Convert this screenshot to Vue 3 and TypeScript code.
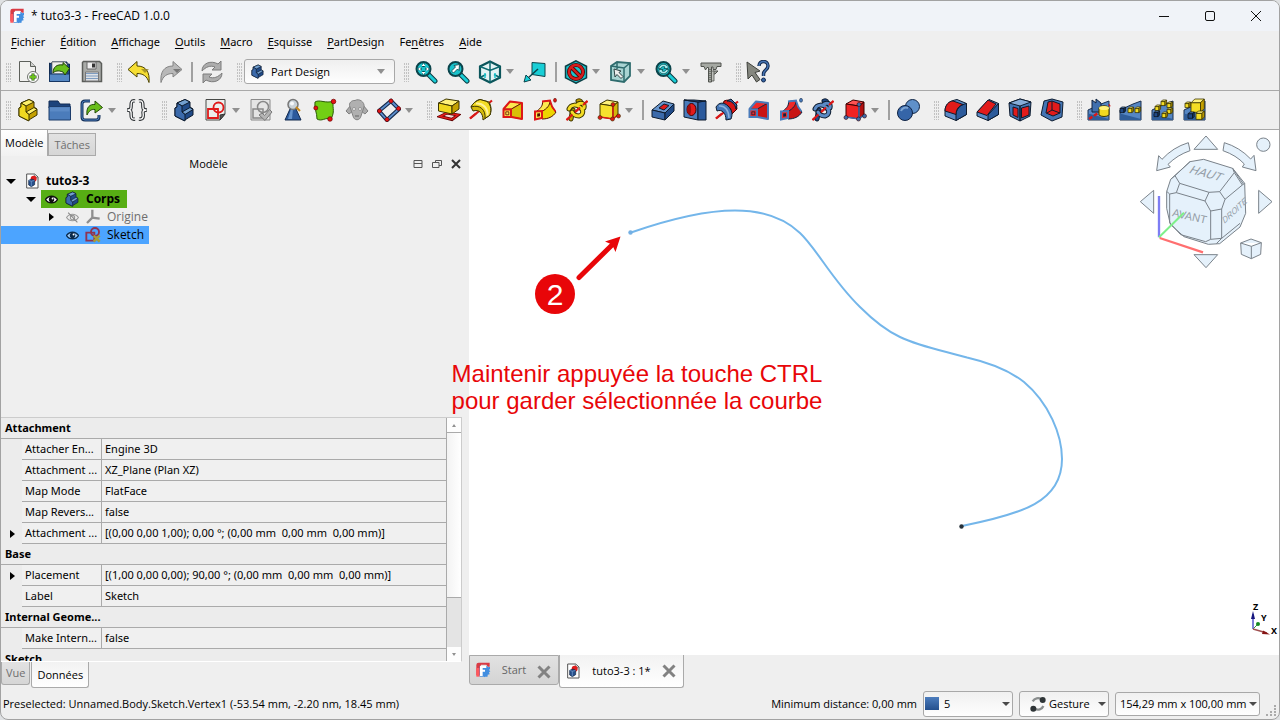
<script setup lang="ts">
import { ref } from 'vue'

type Item =
  | { kind: 'grip' }
  | { kind: 'sep' }
  | { kind: 'combo' }
  | { kind: 'tool'; icon: string; label: string; off?: boolean }
  | { kind: 'more'; label: string }

const grip: Item = { kind: 'grip' }
const sep: Item = { kind: 'sep' }
const tool = (icon: string, label: string, off = false): Item => ({ kind: 'tool', icon, label, off })
const more = (label: string): Item => ({ kind: 'more', label })

const lBody = (a: string, b: string, c: string, s: string) =>
  `<g stroke="${s}" stroke-width="1" stroke-linejoin="round"><path fill="${b}" d="M3 10l2-1V5l8-3.500 5 2.500v5l3 2v6l-9 5.500-9-4.500z"/><path fill="${a}" d="M5 5l8-3.500 5 2.500-8 4zM10 14l8-4.500 3 2-8 5z"/><path fill="${c}" d="M5 5l5 3v6l3 2.500V23L3 18v-8l2-1z"/></g>`

const magnifier = (inner: string) =>
  `<path d="M14 14l7 7" stroke="#0a3a40" stroke-width="5" stroke-linecap="round"/><path d="M15 15l6 6" stroke="#19cdd6" stroke-width="3" stroke-linecap="round"/><circle cx="9.500" cy="9" r="7" fill="#19c2cb" stroke="#0b444b" stroke-width="2"/>${inner}`

const loft = (face: string, side: string, rim: string, dark: string) =>
  `<path d="M2.500 11L9 3.500 21 5l-10.500 6z" fill="${side}" stroke="${dark}" stroke-width=".8"/><path d="M10.500 11L21 5v16l-10.500-2z" fill="${face}" stroke="${dark}" stroke-width=".8"/><path d="M2.500 11L9 3.500 21 5v16l-10.500-2" fill="none" stroke="${rim}" stroke-width="2" stroke-linejoin="round"/><path d="M2.500 11.500h7.500V19H2.500z" fill="${side}" stroke="${rim}" stroke-width="2"/><path d="M4.800 13.800h3v3h-3z" fill="none" stroke="${dark}" stroke-width=".8"/>`

const pipe = (face: string, side: string, rim: string, dark: string) =>
  `<path d="M8 12c5-2 8-5 9-9 1 5 3 8 6 11-3 5-8 7-14 7z" fill="${face}" stroke="${dark}"/><path d="M4 13c4-3 6-6 5.500-9.500L17 2.500c0 5-3 8-8 11z" fill="${side}" stroke="${dark}"/><path d="M9 3.500l8-1c1 5 3 8 5.500 11" fill="none" stroke="${rim}" stroke-width="1.800"/><path d="M2 13.500l7-.5v7l-7 1.500z" fill="${side}" stroke="${rim}" stroke-width="2"/><path d="M4.200 15.500l2.800-.3v3l-2.800.5z" fill="${dark}"/><ellipse cx="22" cy="2.300" rx="1.500" ry="2" fill="${rim}" stroke="${dark}" stroke-width=".5"/>`

const helix = (a: string, b: string, dark: string, rim: string) =>
  `<path d="M1.500 22L22.500 3" stroke="${rim}" stroke-width="2"/><g fill="none" stroke-linecap="round"><path d="M13 3c3-1 4 2 2 7M6 21c1-3 0-5 2-9" stroke="${dark}" stroke-width="5"/><path d="M13 3c3-1 4 2 2 7M6 21c1-3 0-5 2-9" stroke="${b}" stroke-width="3"/><path d="M4 11c2-5 8-5 12-1 3 3 2 7-2 8-4 0-6-2-7-4M13 6c4-2 7 0 6 4" stroke="${dark}" stroke-width="5"/><path d="M4 11c2-5 8-5 12-1 3 3 2 7-2 8-4 0-6-2-7-4M13 6c4-2 7 0 6 4" stroke="${a}" stroke-width="3"/></g><path d="M1.500 22l6-5.500M10 14l5-4.500M18 7l4.500-4" stroke="${rim}" stroke-width="2"/>`

const turned = (a: string, b: string, hi: string, dark: string) =>
  `<path d="M2 9C5 4 8 2 11 1.500L20 4c3 5 2 10 1 13l-7 5c0-7-4-11-10-9z" fill="${b}" stroke="${dark}" stroke-linejoin="round"/><path d="M2 9C11 6 17 12 16 20.500l5-3.500c2-7 0-11-3-13.500l-7-2C7 3 4 5 2 9z" fill="${a}" stroke="${dark}" stroke-linejoin="round"/><path d="M7 5.500c7-1 12 5 11.500 12" fill="none" stroke="${hi}" stroke-width="2"/>`

const box = (face: string, top: string, side: string, dark: string, rim: string) =>
  `<g stroke="${dark}" stroke-linejoin="round"><path fill="${top}" d="M3 6l7-4 11 2-5 4z"/><path fill="${face}" d="M3 6l13 2v13L3 19z"/><path fill="${side}" d="M16 8l5-4v12l-5 5z"/></g><path d="M16 7v14M3 19l13 2 5-4" stroke="${rim}" stroke-width="1.500" fill="none"/><g fill="${rim}" stroke="${dark}" stroke-width=".6"><circle cx="16" cy="6.500" r="2"/><circle cx="3" cy="19.500" r="2"/><circle cx="15.500" cy="21" r="2"/><circle cx="21.500" cy="18" r="2"/></g>`

const wedge = '<path d="M1 12L14 6l8-3v19H1z" fill="#5586c4" stroke="#1a2f4d" stroke-linejoin="round"/><path d="M1 15.500L22 21v1H1z" fill="#2f5d99"/>'
const yCube = (x: number, y: number, s: number, f = '#f4dd24', g = '#fff27a', h = '#c4a000', d = '#3c3500') =>
  `<g transform="translate(${x} ${y}) scale(${s})" stroke="${d}" stroke-width="${0.8 / s}" stroke-linejoin="round"><path fill="${g}" d="M0 2l2-2h5l-2 2z"/><path fill="${f}" d="M0 2h5v5H0z"/><path fill="${h}" d="M5 2l2-2v5L5 7z"/></g>`
const bCube = (x: number, y: number, s: number) => yCube(x, y, s, '#204a87', '#5b8ac5', '#17365f', '#0b1521')

const docIcon = '<path d="M4 1.500h12l5 4.500v16.500H4z" fill="#fff" stroke="#555" stroke-width="1.500"/><path d="M15.500 2v5h5" fill="#ccc" stroke="#555"/><circle cx="14.500" cy="8.500" r="4.500" fill="#e01b1b"/><path d="M7 11l5-2 4 2v6.500l-5 3-4-2.500z" fill="#27508c" stroke="#10233f"/><path d="M7 11l4 1.500 5-1.500M11 12.500V20" stroke="#7fa6d6" fill="none"/>'

const icons: Record<string, string> = {
  logo: '<path d="M2 4.500Q2 1 5.500 1H22v6h-3L17 4H9v16H2z" fill="#d93a44"/><path d="M2 9h5v13H2z" fill="#ff585d"/><path d="M7 6h11v16H7z" fill="#428ee0"/><path d="M13 9l3-1 2-2 2 2 2.500-1v3.500L21 12l2 2-2 1.500 1 3-3 .5v3l-3-1-2 2-1.500-3L10 21v-4l3-1z" fill="#428ee0"/><path d="M7.500 5.500H17V9h-5.500v2.500H15v3h-3.500V21h-4z" fill="#fff"/>',
  new: '<path d="M3.500 1.500h11l5 5v15h-16z" fill="#f1f1ef" stroke="#5d605b"/><path d="M14.500 1.500v5h5" fill="#cfd0ce" stroke="#5d605b"/><circle cx="17" cy="17" r="5.500" fill="#fff" stroke="#6d706b"/><path d="M17 13.500v7M13.500 17h7" stroke="#224f0a" stroke-width="3"/><path d="M17 14v6M14 17h6" stroke="#6cc21d" stroke-width="1.800"/>',
  open: '<path d="M1.500 3v18.500h20V4H19V2H4v2z" fill="#1f4a86" stroke="#102a50"/><path d="M4 2h13l2 2v10H4z" fill="#f0f0ee" stroke="#555" stroke-width=".6"/><path d="M1.500 14h20v7.500h-20z" fill="#5588c4" stroke="#163663"/><path d="M5 13c0-6 4-9 10-8V2.500l6.500 6L17 15l-2-3c-5-2-8-1-10 1z" fill="#6abf1b" stroke="#1e4009"/>',
  save: '<path d="M3.500 1.500h16l2 2v18h-19v-19z" fill="#a9aba8" stroke="#5b5d5a" stroke-width="1.500"/><path d="M7 2h9v7H7z" fill="#eee" stroke="#666"/><path d="M12 3.500h3v4h-3z" fill="#333"/><path d="M5.500 12h13v9h-13z" fill="#dfe2e6" stroke="#777"/><path d="M6 13.500h12M6 16h12M6 18.500h12" stroke="#7d9cc0"/>',
  undo: '<path d="M1 9.500L10 1.500v4.500c9 0 13 6 12 16.500C20 16 16 13.500 10 13.500V17z" fill="#f6de33" stroke="#4c4300" stroke-linejoin="round"/><path d="M14 9h8l-4 4z" fill="#8a7a20" opacity=".7"/>',
  redo: '<path d="M23 9.500L14 1.500v4.500c-9 0-13 6-12 16.500C4 16 8 13.500 14 13.500V17z" fill="#b8b8b8" stroke="#838383" stroke-linejoin="round"/><path d="M14 9h8l-4 4z" fill="#777"/>',
  refresh: '<path d="M2 11C2 3 11 0 18 4l3-3v9h-9l3-3c-5-2-9 0-13 4zM22 13c0 8-9 11-16 7l-3 3v-9h9l-3 3c5 2 9 0 13-4z" fill="#adadad" stroke="#7c7c7c" stroke-linejoin="round"/>',
  body: lBody('#729fcf', '#204a87', '#3b6aab', '#0d1b2e'),
  part: lBody('#fdf06a', '#c4a000', '#f0d820', '#3d3500'),
  group: '<path d="M1 3h9l2 3h10v4H1z" fill="#1c437c" stroke="#122c55"/><path d="M1 8.500h21.500v13.500H1z" fill="#4b7cbb" stroke="#1c3c6b"/><path d="M2 9.500h19.500v4H2z" fill="#6594cd" opacity=".6"/>',
  link: '<path d="M10 3H5Q2 3 2 6v13q0 3 3 3h11q3 0 3-3v-2" fill="none" stroke="#16325a" stroke-width="3"/><path d="M10 3H5Q2 3 2 6v13q0 3 3 3h11q3 0 3-3v-2" fill="none" stroke="#4a7dbd" stroke-width="1"/><path d="M7 17C6 9 10 6 15 6.500V3l7.500 6.500L15 15v-3.500C11 11 9 13 7 17z" fill="#6abf1b" stroke="#234a08" stroke-linejoin="round"/>',
  braces: '<g fill="none" stroke="#34383b" stroke-width="3.500"><path d="M10 3C5 2 6.500 7 6 9.500 6 11 5 12 2 12c3 0 4 1 4 2.500C6.500 17 5 22 10 21M14 3c5-1 3.500 4 4 6.500 0 1.500 1 2.500 4 2.500-3 0-4 1-4 2.500.500 2.500 1 7.500-4 6.500"/></g><g fill="none" stroke="#fff" stroke-width="1.300"><path d="M10 3C5 2 6.500 7 6 9.500 6 11 5 12 2.500 12 5 12 6 13 6 14.500 6.500 17 5 22 10 21M14 3c5-1 3.500 4 4 6.500 0 1.500 1 2.500 3.500 2.500-2.500 0-3.500 1-3.500 2.500.500 2.500 1 7.500-4 6.500"/></g>',
  sketch: '<path d="M2 1.500h19V16l-5 6H2z" fill="#eceeec" stroke="#484a47"/><path d="M16 22v-5l5-1z" fill="#555" stroke="#333"/><g fill="none" stroke="#e01a1a" stroke-width="1.800"><circle cx="14.500" cy="9.500" r="5"/><path d="M4 11h10v9H4z"/></g>',
  validate: '<path d="M2 1.500h19V22H2z" fill="#e4e4e4" stroke="#8a8a8a"/><g fill="none" stroke="#888" stroke-width="1.500"><circle cx="14" cy="9" r="5.500"/><path d="M4 11h10v9H4z"/></g><path d="M10 17l3-2 2.500 2.500 5-6 2.500 2.500-7 8.500z" fill="#b5b5b5" stroke="#7a7a7a"/>',
  check: '<path d="M9 11h6l5 11H4z" fill="#2c5a9c" stroke="#122a4e"/><path d="M10 11l-3 10h4l1-10z" fill="#6593cb"/><circle cx="12" cy="6.500" r="5" fill="#c9d2d9" stroke="#777" stroke-width="1.500"/><circle cx="11" cy="5.500" r="2" fill="#f6f8fa"/><path d="M15 9l4 4" stroke="#c88719" stroke-width="2"/>',
  binder: '<path d="M2 4c5-3 10 2 19-1-3 5 2 9-3 18-6-2-9 3-14 0 0-7-3-10-2-17z" fill="#72cf14" stroke="#2c5c06"/><g fill="#e51414" stroke="#6f0000" stroke-width=".7"><circle cx="20.500" cy="3.500" r="2.300"/><circle cx="2.800" cy="10" r="2"/><circle cx="17" cy="21" r="2.300"/></g>',
  clone: '<path d="M6 7l-5 6 3 3 4-3M18 7l5 6-3 3-4-3" fill="#aaa" stroke="#808080"/><path d="M5 9C3 5 7 2 10 2.500 14 0 20 4 19 9l-3 9c-1 5-7 5-8 0z" fill="#b0b0b0" stroke="#838383"/><circle cx="9" cy="11" r="1.500" fill="#eee" stroke="#777" stroke-width=".6"/><circle cx="15" cy="11" r="1.500" fill="#eee" stroke="#777" stroke-width=".6"/><path d="M10 18h4" stroke="#666"/>',
  datum: '<path d="M14 3l8 8-12 11-8-9z" fill="none" stroke="#13284a" stroke-width="4"/><path d="M14 3l8 8-12 11-8-9z" fill="none" stroke="#5c8dcb" stroke-width="1.800"/><g fill="#e51414" stroke="#6f0000" stroke-width=".6"><circle cx="14" cy="3" r="2"/><circle cx="21.500" cy="10.500" r="2"/><circle cx="10" cy="21.500" r="2"/><circle cx="2.500" cy="13" r="2"/></g>',
  fitAll: magnifier('<path d="M9.500 3.500v11M4 9h11" stroke="#0b444b" stroke-width="2.500" stroke-dasharray="3.500 4"/><path d="M9.500 3.500l2 2.500h-4zM9.500 14.500l-2-2.500h4zM4 9l2.500-2v4zM15 9l-2.500-2v4z" fill="#fff"/>'),
  fitSel: magnifier('<path d="M13.500 4.500l-5.500 1 1.500 1.500-4 4 2 2 4-4 1.500 1.500z" fill="#fff" stroke="#083b41" stroke-width=".8"/>'),
  axo: '<path d="M12 1.500l10 5v11l-10 5-10-5v-11z" fill="#e4f3f4" stroke="#0b555b" stroke-width="2.200"/><path d="M2 6.500l10 4 10-4M12 10.500v12M12 1.500v9M2 17.500l6-3M22 17.500l-6-3" fill="none" stroke="#0b6a70" stroke-width="1.500"/><path d="M7 13v5M17 13v5" stroke="#1bcad2" stroke-width="1.500"/>',
  plane: '<path d="M9 2.500l13 1v13l-13-2z" fill="#18ced6" stroke="#0b444b"/><path d="M15 9L5 18" stroke="#0b444b" stroke-width="1.500"/><path d="M1 22l2-7 5 5z" fill="#18ced6" stroke="#0b444b"/>',
  drawStyle: '<path d="M12 .8l10.500 5.500v11.500L12 23.200 1.500 17.800V6.300z" fill="#19c3cc" stroke="#0b3f45" stroke-width="1.500"/><circle cx="12" cy="12" r="7" fill="none" stroke="#4e0606" stroke-width="4"/><path d="M7 7l10 10" stroke="#4e0606" stroke-width="4"/><circle cx="12" cy="12" r="7" fill="none" stroke="#d51e1e" stroke-width="2.400"/><path d="M7 7l10 10" stroke="#d51e1e" stroke-width="2.400"/>',
  boxSel: '<path d="M2 6l6-4 13 1v13l-6 6-13-2z" fill="#a9d4d3" stroke="#2f6c6e" stroke-width="1.800"/><path d="M2 6l13 2 6-5M15 8v14M8 2v7" fill="none" stroke="#2f6c6e" stroke-width="1.500"/><path d="M5 9l7 2-2 1.500 4 4-2 2-4-4L6 17z" fill="#eee" stroke="#2e4344"/>',
  sync: magnifier('<path d="M4.500 8.500c1-5 7-5 8-3l1.500-1v4h-4l1-1.500c-2-1-4 0-4 1.500zM14.500 9.500c-1 5-7 5-8 3l-1.500 1v-4h4l-1 1.500c2 1 4 0 4-1.500z" fill="#a5ecee" stroke="#083b41" stroke-width=".7"/>'),
  measure: '<path d="M2 3h20v3.500h-4l-1 3h-3V7h-1.500v15h-3V7.500H8L6.500 10 5 6.500H2zM14 11h5l-3 3h-2v-3z" fill="#a6a9a3" stroke="#50534e" stroke-linejoin="round"/><path d="M12.500 11H15v10h-2.500z" fill="#bfc1bc" stroke="#50534e" stroke-width=".8"/><path d="M11 9v12" stroke="#3f423e" stroke-dasharray="1 1"/>',
  whats: '<path d="M1 2l13 9-5 1.500 5 7-3.500 2.500L6 15l-4 4z" fill="#85877f" stroke="#3e403b"/><path d="M13 6c0-6 9-6 9 0 0 4-4.500 4-4.500 8v2" fill="none" stroke="#152b4f" stroke-width="3.500"/><path d="M13 6c0-6 9-6 9 0 0 4-4.500 4-4.500 8v2" fill="none" stroke="#4675b4" stroke-width="1.500"/><circle cx="17.500" cy="20" r="2" fill="#3565a4" stroke="#152b4f"/>',
  pad: '<path d="M3 18.500l7-3.500 11 2-6 4.500z" fill="#f5dada" stroke="#5d0000" stroke-width="3"/><path d="M3 18.500l7-3.500 11 2-6 4.500z" fill="none" stroke="#e21c1c" stroke-width="1.600"/><g stroke="#3d3500" stroke-linejoin="round"><path d="M1.500 5L9 1l13 2-7 5z" fill="#fff17a"/><path d="M1.500 5L15 8v8L1.500 13z" fill="#f0d820"/><path d="M15 8l7-5v8l-7 5z" fill="#c4a000"/></g>',
  revolve: '<path d="M1 20.500L23 2.500" stroke="#d81818" stroke-width="2.200"/>' + turned('#f3dc25', '#d6bb0c', '#fff39a', '#3d3500') + '<path d="M1 20.500l6-5" stroke="#d81818" stroke-width="2.200"/>',
  loft: loft('#d9be08', '#fce94f', '#dd1717', '#5f0000'),
  pipe: pipe('#edd400', '#fce94f', '#dd1717', '#4d1000'),
  helix: helix('#f3dc25', '#c4a000', '#3d3500', '#dd1717'),
  addPrim: box('#f6e02d', '#fff27a', '#d3b60a', '#3d3500', '#dd1717'),
  pocket: '<g stroke="#0d1b2e" stroke-linejoin="round"><path d="M1 12L12 3l11 3-9 9z" fill="#6795cd"/><path d="M1 12l13 3v7L1 19z" fill="#3b6aab"/><path d="M14 15l9-9v7l-9 9z" fill="#204a87"/><path d="M8 10l5-4 5 1.500-5 4.500z" fill="#e01a1a"/></g>',
  hole: '<g stroke="#0d1b2e" stroke-linejoin="round"><path d="M1 2l14 2v18L1 19z" fill="#4b7cbb"/><path d="M15 4l8-1v19h-8z" fill="#2c5a9c"/><path d="M1 2h10l12 1-8 1z" fill="#204a87"/></g><ellipse cx="8.500" cy="11.500" rx="4.500" ry="6" fill="#e31b1b" stroke="#400"/><path d="M7 6c-4 3-4 9 0 11 1.500-3 1.500-8 0-11z" fill="#a10d0d"/>',
  groove: '<path d="M1 20.500L23 3.500" stroke="#d81818" stroke-width="2.200"/><path d="M9 3c7-3 13 2 13 8l-5 5C16 9 13 7 8 7z" fill="#d61717" stroke="#4e0000"/><path d="M1 9C4 4 9 4 13 8c4 4 5 8 3 13l-5 1c0-7-4-11-9-9z" fill="#4476b7" stroke="#0d1b2e"/><path d="M4 8c6-1 10 5 10 12" fill="none" stroke="#8db3dd" stroke-width="1.500"/><path d="M12 3l4-2 6 6-1 4C20 6 17 3 12 3z" fill="#3565a8" stroke="#0d1b2e"/><path d="M1 20.500l6-5" stroke="#d81818" stroke-width="2.200"/>',
  subLoft: loft('#c81414', '#ef2929', '#4a7bba', '#10233f'),
  subPipe: pipe('#c81414', '#ef2929', '#4a7bba', '#10233f'),
  subHelix: helix('#5b8ac5', '#204a87', '#0d1b2e', '#dd1717'),
  subPrim: box('#ef2323', '#ff5252', '#b51010', '#3d0000', '#3e6dac'),
  bool: '<g stroke="#0f2343"><circle cx="15.500" cy="8.500" r="7" fill="#5f90c9"/><circle cx="8" cy="15" r="7.500" fill="#3565a8"/></g><path d="M4 13c1-3 4-4 7-3" stroke="#7ba3d2" stroke-width="2" fill="none"/>',
  fillet: '<g stroke="#0d1b2e" stroke-linejoin="round"><path d="M13 1.500l9.500 4v11L12 22.500 1 18v-5C1 7 5 3 13 1.500z" fill="#5b8ac5"/><path d="M12 17c0-6 4-10 10.500-11.500v11L12 22.500z" fill="#2d5b9b"/><path d="M1 13C1 7 5 3 9 3l10 3.500c-4 1-7 5-7 10z" fill="#e21b1b"/></g>',
  chamfer: '<g stroke="#0d1b2e" stroke-linejoin="round"><path d="M13 1.500l9.500 4v11L12 22.500 1 18v-4z" fill="#5b8ac5"/><path d="M12 17l10.500-11.500v11L12 22.500z" fill="#2d5b9b"/><path d="M1 14L12 2l8 4-9 11.500z" fill="#e21b1b"/></g>',
  draft: '<g stroke="#0d1b2e" stroke-linejoin="round"><path d="M1 5l11-4 11 3-1 14-10 5L2 18z" fill="#4475b4"/><path d="M1 5l11-4 11 3-11 4z" fill="#86acd8"/><path d="M12 8v15" stroke-width="1.500"/><path d="M5 9l5 1.500v9L5 17zM13.500 10L21 8v9l-7.500 3z" fill="#e21b1b"/></g>',
  thick: '<g stroke="#0d1b2e" stroke-linejoin="round"><path d="M4 3l8-2 11 3-1 15-10 4L1 17z" fill="#4475b4"/><path d="M8 4l4-1 8 3v9l-7 3-7-3z" fill="#e21b1b"/><path d="M12 3v9l8 3M12 12l-5 3" fill="none"/></g>',
  mirror: wedge + '<path d="M5 2l4 3V1l5 4v9H5z" fill="#3f6fae" stroke="#10233f"/><path d="M2 21L23 7" stroke="#d81818" stroke-width="2.500" stroke-dasharray="4 2"/><path d="M12 10c1-3 9-3 10 0v7c-2 2-8 2-10 0z" fill="#f0d820" stroke="#3d3500"/><ellipse cx="17" cy="10" rx="5" ry="2" fill="#fff17a"/>',
  linear: wedge + bCube(1, 9, 0.8) + yCube(9, 9, 0.8) + yCube(16, 9, 0.8),
  polar: wedge + yCube(10, 2, 0.8) + yCube(16, 4, 0.8) + yCube(4, 7, 0.8) + yCube(16, 10, 0.8) + bCube(3, 13, 0.8) + yCube(11, 14, 0.8),
  multi: wedge + yCube(8, 1, 1.9) + yCube(2, 4, 0.8) + bCube(5, 14, 0.9) + yCube(13, 13, 1.2),
  doc: docIcon,
  origin: '<path d="M11 1v12l11 1.500M11 13l-8 8" fill="none" stroke="#8e8e8e" stroke-width="3.500"/>',
  treeSketch: '<g fill="none" stroke="#8f3350" stroke-width="2.800"><circle cx="15" cy="7.500" r="6"/><path d="M2 8.500h12v12H2z"/></g><path d="M13 13l9 9M22 13l-9 9" stroke="#a69c35" stroke-width="3.500"/>',
  eye: '<path d="M1 12C6 4 18 4 23 12 18 20 6 20 1 12z" fill="#fff" stroke="#111" stroke-width="2.500"/><circle cx="12" cy="12" r="5" fill="#111"/><circle cx="14" cy="10" r="1.800" fill="#fff"/>',
  eyeSketch: '<path d="M1 12C6 4 18 4 23 12 18 20 6 20 1 12z" fill="#9fcfff" stroke="#0c2b4c" stroke-width="2.500"/><circle cx="12" cy="12" r="5" fill="#0c2b4c"/><circle cx="14" cy="10" r="1.800" fill="#fff"/>',
  eyeOff: '<path d="M1 12C6 4 18 4 23 12 18 20 6 20 1 12z" fill="none" stroke="#999" stroke-width="2"/><circle cx="12" cy="12" r="4" fill="none" stroke="#999" stroke-width="2"/><path d="M4 3l17 18" stroke="#888" stroke-width="2"/>',
  gesture: '<path d="M4 8C7 3 13 2 17 5M20 15c-2 5-8 7-13 4" fill="none" stroke="#8a8e8e" stroke-width="3.500"/><circle cx="19" cy="6" r="4.500" fill="#2e3436"/><circle cx="5" cy="19" r="4.500" fill="#2e3436"/>',
}

const mainBar: Item[] = [
  grip, tool('new', 'Nouveau'), tool('open', 'Ouvrir'), tool('save', 'Enregistrer'),
  grip, tool('undo', 'Annuler'), tool('redo', 'Rétablir', true), sep, tool('refresh', 'Rafraîchir', true),
  grip, { kind: 'combo' },
  grip, tool('fitAll', 'Tout afficher'), tool('fitSel', 'Afficher la sélection'), tool('axo', 'Vue isométrique'), more('Vues'),
  tool('plane', "Aligner à la sélection"), sep, tool('drawStyle', 'Style de représentation'), more('Styles'),
  tool('boxSel', 'Boîte englobante'), more('Sélection'), tool('sync', 'Synchroniser la vue'), more('Synchronisation'), tool('measure', 'Mesurer'),
  grip, tool('whats', "Qu'est-ce que c'est ?"),
]
const designBar: Item[] = [
  grip, tool('part', 'Pièce'), tool('group', 'Groupe'), tool('link', 'Lien'), more('Liens'), tool('braces', 'Variables'),
  grip, tool('body', 'Corps'), tool('sketch', 'Esquisse'), more('Esquisses'), tool('validate', 'Valider', true), tool('check', 'Vérifier'),
  tool('binder', 'Forme liée'), tool('clone', 'Clone', true), tool('datum', 'Référence'), more('Références'),
  grip, tool('pad', 'Protrusion'), tool('revolve', 'Révolution'), tool('loft', 'Lissage'), tool('pipe', 'Balayage'), tool('helix', 'Hélice'), tool('addPrim', 'Primitive additive'), more('Primitives additives'),
  sep, tool('pocket', 'Cavité'), tool('hole', 'Perçage'), tool('groove', 'Rainure'), tool('subLoft', 'Lissage soustractif'), tool('subPipe', 'Balayage soustractif'), tool('subHelix', 'Hélice soustractive'), tool('subPrim', 'Primitive soustractive'), more('Primitives soustractives'),
  sep, tool('bool', 'Opération booléenne'),
  grip, tool('fillet', 'Congé'), tool('chamfer', 'Chanfrein'), tool('draft', 'Dépouille'), tool('thick', 'Évidement'),
  grip, tool('mirror', 'Symétrie'), tool('linear', 'Répétition linéaire'), tool('polar', 'Répétition circulaire'), tool('multi', 'Transformation multiple'),
]

const menus: [string, string, string][] = [
  ['', 'F', 'ichier'], ['', 'É', 'dition'], ['', 'A', 'ffichage'], ['', 'O', 'utils'], ['', 'M', 'acro'],
  ['', 'E', 'squisse'], ['', 'P', 'artDesign'], ['Fe', 'n', 'êtres'], ['', 'A', 'ide'],
]

interface Prop { name: string; value?: string; open?: boolean }
const props: Prop[] = [
  { name: 'Attachment' },
  { name: 'Attacher En...', value: 'Engine 3D' },
  { name: 'Attachment ...', value: 'XZ_Plane (Plan XZ)' },
  { name: 'Map Mode', value: 'FlatFace' },
  { name: 'Map Revers...', value: 'false' },
  { name: 'Attachment ...', value: '[(0,00 0,00 1,00); 0,00 °; (0,00 mm  0,00 mm  0,00 mm)]', open: true },
  { name: 'Base' },
  { name: 'Placement', value: '[(1,00 0,00 0,00); 90,00 °; (0,00 mm  0,00 mm  0,00 mm)]', open: true },
  { name: 'Label', value: 'Sketch' },
  { name: 'Internal Geome...' },
  { name: 'Make Intern...', value: 'false' },
  { name: 'Sketch' },
]
const workbench = ref('Part Design')
</script>

<template>
  <div class="window">
    <header class="title">
      <svg class="logo" viewBox="0 0 24 24" v-html="icons.logo" />
      <h1>* tuto3-3 - FreeCAD 1.0.0</h1>
      <button class="win" aria-label="Réduire"><svg viewBox="0 0 12 12"><path d="M1 6.500h10" /></svg></button>
      <button class="win" aria-label="Agrandir"><svg viewBox="0 0 12 12"><rect x="1.500" y="1.500" width="9" height="9" rx="1.500" /></svg></button>
      <button class="win" aria-label="Fermer"><svg viewBox="0 0 12 12"><path d="M1 1l10 10M11 1L1 11" /></svg></button>
    </header>

    <nav class="menubar">
      <button v-for="m in menus" :key="m.join('')">{{ m[0] }}<u>{{ m[1] }}</u>{{ m[2] }}</button>
    </nav>

    <div v-for="(bar, b) in [mainBar, designBar]" :key="b" class="toolbar" role="toolbar">
      <template v-for="(it, i) in bar" :key="i">
        <span v-if="it.kind === 'grip'" class="grip" />
        <span v-else-if="it.kind === 'sep'" class="sep" />
        <button v-else-if="it.kind === 'tool'" class="tool" :aria-label="it.label" :disabled="it.off">
          <svg viewBox="0 0 24 24" fill="none" v-html="icons[it.icon]" />
        </button>
        <button v-else-if="it.kind === 'more'" class="more" :aria-label="it.label"><i class="caret" /></button>
        <label v-else class="combo">
          <svg viewBox="0 0 24 24" v-html="icons.body" />
          <select v-model="workbench" aria-label="Atelier"><option>Part Design</option></select>
          <i class="caret" />
        </label>
      </template>
    </div>

    <main>
      <aside>
        <section class="tree-pane">
          <div class="tabs" role="tablist">
            <button class="tab on" role="tab">Modèle</button>
            <button class="tab" role="tab">Tâches</button>
          </div>
          <div class="dock-head">
            <h2>Modèle</h2>
            <button aria-label="Replier"><svg viewBox="0 0 12 12"><path d="M2 2.500h8v7H2zM2 5.500h8" /></svg></button>
            <button aria-label="Détacher"><svg viewBox="0 0 12 12"><path d="M4.500 4V2.500h6v5H8M1.500 4.500H8v5H1.500z" /></svg></button>
            <button aria-label="Fermer"><svg viewBox="0 0 12 12"><path class="bold" d="M2 2l8 8M10 2l-8 8" /></svg></button>
          </div>
          <ul class="tree">
            <li class="lvl0"><i class="fold" /><svg viewBox="0 0 24 24" v-html="icons.doc" /><b>tuto3-3</b></li>
            <li class="lvl1"><i class="fold" />
              <span class="active"><svg class="eye" viewBox="0 0 24 24" v-html="icons.eye" /><svg viewBox="0 0 24 24" v-html="icons.body" /><b>Corps</b></span>
            </li>
            <li class="lvl2"><i class="fold shut" /><svg class="eye" viewBox="0 0 24 24" v-html="icons.eyeOff" /><svg viewBox="0 0 24 24" v-html="icons.origin" /><span class="dim">Origine</span></li>
            <li class="lvl3"><svg class="eye" viewBox="0 0 24 24" v-html="icons.eyeSketch" /><svg viewBox="0 0 24 24" v-html="icons.treeSketch" /><span>Sketch</span></li>
          </ul>
        </section>

        <section class="prop-pane">
          <div class="prop-view">
            <div class="prop-clip">
              <table>
                <colgroup><col class="c-ind"><col class="c-name"><col></colgroup>
                <tbody>
                  <template v-for="(p, i) in props" :key="i">
                    <tr v-if="p.value === undefined" class="group"><th colspan="3">{{ p.name }}</th></tr>
                    <tr v-else><td class="ind"><i v-if="p.open" class="fold shut" /></td><td class="name">{{ p.name }}</td><td class="val">{{ p.value }}</td></tr>
                  </template>
                </tbody>
              </table>
            </div>
            <div class="scroll">
              <button aria-label="Haut"><i class="caret up" /></button>
              <div class="thumb" />
              <div class="track" />
              <button aria-label="Bas"><i class="caret" /></button>
            </div>
          </div>
          <div class="tabs low" role="tablist">
            <button class="tab" role="tab">Vue</button>
            <button class="tab on" role="tab">Données</button>
          </div>
        </section>
      </aside>

      <section class="stage">
        <div class="view">
          <svg class="scene" viewBox="469 130 810 525">
            <path d="M631 232.500C670 219 705 210.500 735 210.500C762 210.500 784 218 800 233C817 249 832 280 860 307C872 319 885 330 900 337C921 347 945 351 967 357.500C991 363 1010 371 1024 382C1049 403 1062 435 1062 459C1062 502 1022 514 962 526" fill="none" stroke="#74b6ea" stroke-width="2" />
            <circle cx="630.500" cy="232.500" r="2.200" fill="#74b0e4" />
            <circle cx="961.500" cy="526.500" r="2.200" fill="#27313a" />
            <path d="M579 277.500L612 245" stroke="#e80609" stroke-width="5" stroke-linecap="round" />
            <path d="M620.500 236.500L605 241.500l7 3 3.500 7.500z" fill="#e80609" />
            <circle cx="555" cy="294" r="20" fill="#e80609" />
            <text x="555" y="305" class="num">2</text>
            <text x="637" y="382" class="note">Maintenir appuyée la touche CTRL</text>
            <text x="637" y="409" class="note">pour garder sélectionnée la courbe</text>
          </svg>

          <svg class="navcube" viewBox="0 0 450 435">
            <g fill="#e5f1fb" stroke="#7a828a" stroke-width="3" stroke-linejoin="round">
              <path d="M231 18l35 40h-71zM34 215l40-34v69zM429 215l-40-34v69zM195 374h71l-35 39z" />
              <circle cx="403" cy="44" r="20" />
              <path d="M178 38L183 62Q145 75 117 103L124 111 83 122 89 77 99 88Q132 52 178 38zM286 38L282 62Q322 76 346 102L340 111 381 122 375 76 365 87Q332 52 286 38z" />
              <path d="M366 327l31 11-2 35-28 13-30-13-2-34zM335 339l32 10 30-11M367 349v37" />
              <path d="M183 95L224 88 311 115 347 160 350 250 333 291 272 341 238 343 165 320 124 283 113 235V185L125 148z" />
              <path fill="none" d="M183 95L138 137 152 160 240 187 272 185 316 128 311 115M240 187L228 213 142 188 152 160M125 148L138 137M142 188L122 192 113 184M122 192V278L155 314 230 335 245 328V243L228 213M272 185L288 208 278 237 245 243M288 208L340 165 316 128M340 165L347 160M278 237V325L333 280M245 328L278 325 262 341M311 115L343 162" />
            </g>
            <path d="M90 198v124" stroke="#7d7df4" stroke-width="7" />
            <g class="face">
              <text transform="translate(178 128) rotate(15) skewX(-20)" font-size="36">HAUT</text>
              <text transform="translate(128 258) rotate(13)" font-size="33">AVANT</text>
              <text transform="translate(286 282) rotate(-43) skewX(-22)" font-size="25">DROITE</text>
            </g>
            <path d="M90 322l75-74" stroke="#7ef08a" stroke-width="6" />
            <path d="M92 324l130 43" stroke="#ff6f70" stroke-width="7" />
          </svg>

          <svg class="axes" viewBox="0 0 30 40">
            <path d="M4 29V14" stroke="#8080d8" stroke-width="2" /><path d="M4 11l2 8H2z" fill="#16167e" />
            <path d="M4 29l6-6" stroke="#3d9440" /><circle cx="9" cy="24" r="2" fill="#178a20" />
            <path d="M4 29l14 4" stroke="#a05050" stroke-width="1.500" /><path d="M21 34.500l-8-.5 1-3.500z" fill="#861414" />
            <text x="4" y="10">Z</text><text x="12" y="21">Y</text><text x="22" y="34">X</text>
          </svg>
        </div>
        <div class="docs" role="tablist">
          <div class="doc">
            <svg class="dlogo" viewBox="0 0 24 24" v-html="icons.logo" /><button role="tab">Start</button>
            <button class="x" aria-label="Fermer Start"><svg viewBox="0 0 14 14"><path d="M1.500 1.500l11 11M12.500 1.500l-11 11" /></svg></button>
          </div>
          <div class="doc on">
            <svg class="dlogo" viewBox="0 0 24 24" v-html="icons.doc" /><button role="tab">tuto3-3 : 1*</button>
            <button class="x" aria-label="Fermer tuto3-3"><svg viewBox="0 0 14 14"><path d="M1.500 1.500l11 11M12.500 1.500l-11 11" /></svg></button>
          </div>
        </div>
      </section>
    </main>

    <footer>
      <span class="msg">Preselected: Unnamed.Body.Sketch.Vertex1 (-53.54 mm, -2.20 nm, 18.45 mm)</span>
      <span>Minimum distance: 0,00 mm</span>
      <button class="pick notif"><i class="swatch" />5<i class="caret dark" /></button>
      <button class="pick nav"><svg viewBox="0 0 24 24" v-html="icons.gesture" />Gesture<i class="caret dark" /></button>
      <button class="pick dims">154,29 mm x 100,00 mm<i class="caret dark" /></button>
      <svg class="size" viewBox="0 0 14 14"><path d="M9 2h2M9 5h2M5 5h0M5 8h2M9 8h2M1 11h2M5 11h2M9 11h2" /></svg>
    </footer>
  </div>
</template>

<style>
body { margin: 0; background: #dfe1e3; }
</style>

<style scoped>
* { box-sizing: border-box; }
.window {
  display: flex; flex-direction: column; height: 100vh; overflow: hidden;
  border: 1px solid #a2a2a2; border-radius: 8px; background: #efefef;
  font: 11px/16px "Open Sans", "Noto Sans", sans-serif; color: #000;
}
button, select { margin: 0; padding: 0; border: 0; background: none; font: inherit; color: inherit; }
h1, h2 { margin: 0; font: inherit; }
svg { display: block; flex: none; }
.title { display: flex; align-items: center; height: 30px; padding-left: 8px; background: #f0f3f8; flex: none; }
.logo { width: 16px; height: 16px; }
.title h1 { flex: 1; margin-left: 6px; font-size: 12px; }
.win { width: 46px; height: 30px; display: flex; align-items: center; justify-content: center; }
.win svg { width: 12px; height: 12px; fill: none; stroke: #111; stroke-width: 1; }
.menubar { display: flex; align-items: center; height: 22px; padding-left: 3px; flex: none; font-family: "Noto Sans", sans-serif; }
.menubar button { padding: 0 8px 0 7px; }
.menubar u { text-underline-offset: 2px; }
.toolbar { display: flex; align-items: center; height: 39px; padding-left: 2px; border-bottom: 1px solid #a9a9a9; flex: none; }
.menubar + .toolbar { height: 38px; }
.grip {
  width: 6px; height: 20px; margin-left: 9px; flex: none;
  background: repeating-linear-gradient(#efefef 0 1px, transparent 1px 3px), repeating-linear-gradient(90deg, #c2c2c2 0 1px, #efefef 1px 2px);
}
.grip:first-child { margin-left: 3px; }
.sep { width: 9px; height: 20px; flex: none; border-left: 2px solid #a0a0a0; margin: 0 -4px 0 4px; }
.tool { width: 32px; height: 32px; display: flex; align-items: center; justify-content: center; flex: none; }
.tool svg { width: 24px; height: 24px; }
.more { width: 13px; height: 20px; display: flex; align-items: center; flex: none; }
.caret { width: 0; height: 0; flex: none; border: 4px solid transparent; border-top: 5px solid #909090; border-bottom-width: 0; }
.caret.dark { border-top-color: #4a4a4a; border-top-width: 4px; }
.combo {
  display: flex; align-items: center; width: 151px; height: 25px; margin: 0 0 0 1px; padding: 0 9px 0 5px; flex: none;
  border: 1px solid #a8a8a8; border-radius: 3px; background: linear-gradient(#efefef, #fefefe);
}
.combo svg { width: 15px; height: 15px; }
.combo select { flex: 1; margin-left: 6px; appearance: none; outline: 0; }
main { display: flex; flex: 1; min-height: 0; }
aside { width: 468px; flex: none; display: flex; flex-direction: column; min-height: 0; }
.tree-pane { flex: 287 1 0; min-height: 0; }
.prop-pane { flex: 271 1 0; min-height: 0; display: flex; flex-direction: column; padding: 0 7px 0 0; }
.tabs { display: flex; align-items: flex-start; height: 26px; flex: none; }
.tab { height: 23px; margin-top: 3px; padding: 0 5px; border: 1px solid #aaa; color: #6f6f6f; background: linear-gradient(#e2e2e2, #d6d6d6); }
.tab.on { height: 26px; margin-top: 0; border-width: 0 1px 0 0; padding: 0 4px; color: #000; background: linear-gradient(#fff, #f2f2f2); }
.low .tab { height: 23px; margin: 0; padding: 0 4px; border-radius: 0 0 3px 3px; border-top: 0; }
.low .tab.on { height: 26px; padding: 0 5px; border-width: 0 1px 1px; background: linear-gradient(#f2f2f2, #fff); margin-left: 1px; }
.dock-head { display: flex; align-items: center; height: 16px; padding-right: 4px; }
.dock-head h2 { flex: 1; padding-left: 8px; text-align: center; }
.dock-head button { width: 19px; display: flex; justify-content: center; }
.dock-head svg { width: 12px; height: 12px; fill: none; stroke: #555; stroke-width: 1; }
.dock-head .bold { stroke: #333; stroke-width: 2; }
.tree { list-style: none; margin: 0; padding: 0; }
.tree li { display: flex; align-items: center; height: 18px; font-size: 12px; }
.tree svg { width: 16px; height: 16px; margin-right: 6px; }
.tree .eye { width: 13px; height: 13px; margin-right: 6px; }
.tree li li svg { margin-right: 5px; }
.tree .dim { color: #6e6e6e; }
.fold { width: 0; height: 0; flex: none; display: block; border: 5px solid transparent; border-top-color: #000; border-bottom: 0; margin-right: 8px; }
.fold.shut { border: 4px solid transparent; border-left: 5px solid #000; border-right: 0; margin-right: 12px; }
.lvl0 { padding-left: 5px; }
.lvl1 { padding-left: 25px; }
.lvl1 .fold { margin-right: 5px; }
.lvl2 { padding-left: 48px; }
.lvl3 { padding-left: 65px; width: 148px; background: #4ca4ff; }
.active { display: flex; align-items: center; height: 18px; padding: 0 7px 0 4px; background: #57ae14; }
.prop-view { display: flex; flex: 1; min-height: 0; border-top: 1px solid #ccc; border-right: 1px solid #ccc; border-bottom: 1px solid #fff; }
.prop-clip { flex: 1; min-width: 0; overflow: hidden; background: #f0f0f0; }
table { width: 100%; border-collapse: separate; border-spacing: 0; table-layout: fixed; font-family: "Noto Sans", sans-serif; }
.c-ind { width: 21px; }
.c-name { width: 80px; }
td, th { padding: 0 4px; height: 21px; white-space: pre; text-align: left; border-bottom: 1px solid #aaa; line-height: 16px; }
th { font-weight: 700; background: #ececec; }
td.ind { padding: 0 0 0 9px; border-bottom: 0; background: #ececec; }
td.ind .fold { margin: 0; }
td.name { border-right: 1px solid #aaa; padding: 0 3px; }
td.val { padding: 0 3px; }
.scroll { width: 15px; flex: none; display: flex; flex-direction: column; border-left: 1px solid #aaa; background: #e4e4e4; }
.scroll button { height: 14px; display: flex; align-items: center; justify-content: center; background: #fdfdfd; flex: none; }
.scroll .caret { border-width: 3px 2px 0; }
.scroll .caret.up { border-width: 0 2px 3px; border-color: transparent transparent #909090; }
.thumb { flex: 167 1 0; background: linear-gradient(90deg, #f3f3f3, #fff); border: 1px solid #aaa; border-width: 1px 0; }
.track { flex: 50 1 0; }
.stage { flex: 1; min-width: 0; display: flex; flex-direction: column; }
.view { position: relative; flex: 1; min-height: 0; background: #fff; }
.scene { position: absolute; inset: 0; width: 100%; height: 100%; overflow: visible; }
.scene text { font-family: "Liberation Sans", Arial, sans-serif; text-anchor: middle; }
.num { font-size: 30px; fill: #fff; }
.note { font-size: 24px; fill: #e80609; }
.navcube { position: absolute; top: 0; right: 0; width: 150px; height: 145px; }
.face text { font-family: "Liberation Sans", Arial, sans-serif; fill: #939ca5; }
.axes { position: absolute; right: 0; bottom: 15px; width: 30px; height: 40px; fill: none; }
.axes text { font: 700 9px "Noto Sans", sans-serif; fill: #000; }
.docs { display: flex; align-items: flex-start; height: 33px; flex: none; }
.doc { display: flex; align-items: center; height: 30px; width: 90px; padding: 0 7px 0 5px; border: 1px solid #aaa; border-radius: 0 0 3px 3px; background: linear-gradient(#e2e2e2, #d4d4d4); color: #666; }
.doc.on { height: 33px; width: 125px; border-top: 0; background: linear-gradient(#f2f2f2, #fff); color: #000; }
.dlogo { width: 16px; height: 16px; }
.doc > button:not(.x) { flex: 1; white-space: nowrap; }
.doc .x svg { width: 14px; height: 14px; stroke: #828282; stroke-width: 3; fill: none; margin-top: 3px; }
.doc.on .x svg { margin-top: 0; }
footer { display: flex; align-items: center; height: 31px; padding-left: 2px; flex: none; }
.msg { flex: 1; }
.pick { display: flex; align-items: center; height: 26px; margin-left: 6px; border: 1px solid #a8a8a8; border-radius: 3px; background: linear-gradient(#f0f0f0, #fefefe); white-space: nowrap; }
.pick .caret { margin-left: auto; }
.notif { width: 90px; padding: 0 2px 0 1px; }
.nav { width: 90px; padding: 0 2px 0 10px; }
.nav svg { width: 16px; height: 16px; margin-right: 3px; }
.dims { width: 145px; height: 24px; padding: 0 2px 0 4px; }
.swatch { width: 14px; height: 13px; margin-right: 5px; background: linear-gradient(#4c7dbd, #244f8d); }
.size { width: 14px; height: 14px; margin: 14px 0 0 5px; fill: none; stroke: #aaa; stroke-width: 2; }
</style>
